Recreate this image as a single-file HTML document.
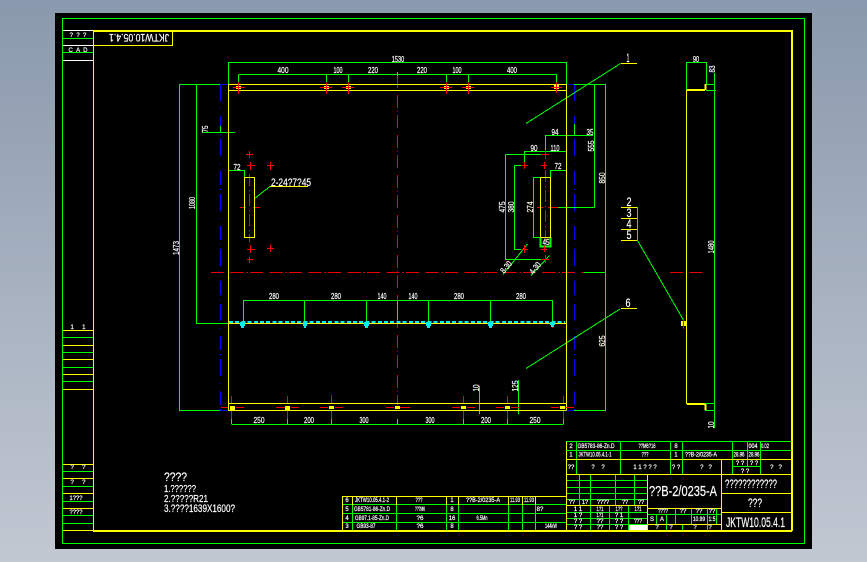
<!DOCTYPE html>
<html><head><meta charset="utf-8"><style>
html,body{margin:0;padding:0;width:867px;height:562px;overflow:hidden;background:linear-gradient(#8a99ad,#c2c8d2)}
svg{position:absolute;left:0;top:0}
.l{fill:none;shape-rendering:crispEdges}
text{fill:#fff;stroke:#fff;stroke-width:.2;font-family:"Liberation Sans",sans-serif;font-size:9px;text-anchor:middle}
.s{font-size:6px}.m{font-size:8.5px}
</style></head><body>
<svg width="867" height="562" viewBox="0 0 867 562" lengthAdjust="spacingAndGlyphs">
<rect x="55" y="13" width="757" height="536" fill="#000"/>
<!-- outer frame -->
<path class="l" stroke="#0f0" d="M62.5 18.5H804.5V543.5H62.5ZM63 38.5H93M63 52.5H93M63 337.5H93M63 352.5H93M63 367.5H93M63 381.5H93M63 471.5H93M63 486.5H93M63 501.5H93M63 515.5H93M63 523.5H93"/>
<path class="l" stroke="#fff" d="M63 30.5H93M63 45.5H93M63 60.5H93"/>
<path class="l" stroke="#ff0" d="M93.5 31V531M172.5 31V45.5H94M63 330.5H93M63 345.5H93M63 359.5H93M63 374.5H93M63 389.5H93M63 464.5H93M63 478.5H93M63 493.5H93M63 508.5H93M63 530.5H93"/>
<path class="l" stroke="#ff0" stroke-width="2" d="M93 31H792M792 30V531M93 531H792"/>
<text x="78" y="37" class="s">? &#160;? &#160;?</text><text x="78" y="52" class="s">C &#160;A &#160;D</text>
<text x="78" y="329" class="s">1 &#160; &#160; 1</text><text x="78" y="469" class="s">? &#160; &#160; ?</text><text x="78" y="484" class="s">? &#160; &#160; ?</text><text x="76" y="500" class="s" textLength="13" lengthAdjust="spacingAndGlyphs">1???</text><text x="76" y="514" class="s" textLength="13" lengthAdjust="spacingAndGlyphs">????</text>
<text transform="rotate(180 139 38)" x="139" y="42" style="font-size:11px" textLength="60" lengthAdjust="spacingAndGlyphs">JKTW10.05.4.1</text>
<!-- blue centerlines -->
<path class="l" stroke="#00f" d="M220.5 84V410M574.5 84V410" stroke-dasharray="17 7 1 7 14 4 1 4"/>
<path class="l" stroke="#00f" d="M220 84.5H228M574 84.5H566M220 410.5H228M566 410.5H574"/>
<!-- red centerlines -->
<path class="l" stroke="#f00" d="M397.5 75V405" stroke-dasharray="13 7 13 2.5 1 3.5"/>
<path class="l" stroke="#e00" d="M211 272.5H584M670 272.5H704" stroke-dasharray="13 6.5 13 3 1.5 2"/>
<path class="l" stroke="#f00" d="M249.5 174V242M545.5 170V242" stroke-dasharray="12 4 1 3"/>
<path class="l" stroke="#f00" d="M240 207.5H246M253 207.5H260M537 207.5H543M548 207.5H558"/>
<!-- green dims -->
<path class="l" stroke="#0f0" d="M228.5 62.5H566.5V84M228.5 62V84M238.5 74.5H556.5V84M238.5 75V84M326.5 75V82M348.5 75V82M446.5 75V82M468.5 75V82M397.5 72V76
M179.5 84.5H220M179.5 84.5V410.5H220M196.5 84.5V323.5H228M202 132.5H235M220.5 126V132M228.5 120V132
M228.5 170.5H244.5V177M228.5 170V178
M550.5 177V170.5H566.5M566.5 170V177M566.5 123V135
M574 84.5H605.5V410.5H574M594.5 84.5V207.5H558M545.5 135.5H593M545.5 135V154M574.5 124V135
M524.5 151.5H566.5M524.5 151V165M505.5 154.5H545M505.5 154.5V259.5H545M514.5 165.5H525M514.5 165.5V249.5H525M533.5 177.5H544M533.5 177.5V237.5H540
M584 272.5H605M637.5 207V240.5
M243.5 300.5H552.5M243.5 300V322M304.5 300V322M366.5 300V322M428.5 300V322M490.5 300V322M552.5 300V322M397.5 300V320
M231.5 424.5H563.5M231.5 419V424M287.5 419V424M331.5 419V424M397.5 419V424M463.5 419V424M507.5 419V424M563.5 419V424
M479.5 386V414M518.5 380V414M476 403.5H480M476 410.5H480M516 403.5H520M516 410.5H520
M686.5 62.5H706.5V84M706 84.5H715M706 90.5H716M714.5 73V428M686.5 62V90M705 403.5H715M705 410.5H715"/>
<path class="l" stroke="#0f0" stroke-width="2" d="M540.5 237V246.5H550.5V237"/>
<!-- green leaders -->
<path class="l" stroke="#0f0" d="M620.5 63.5L526 123.5M620 309L526 368.5M254.5 198.5L270 186.5M527.5 244L503 274.5M549.5 255.5L531 275.5M637.5 240.5L684 321"/>
<!-- yellow plate -->
<path class="l" stroke="#ff0" d="M228.5 84V410.5M566.5 84V410.5M228 84.5H566M228 90.5H566M228 403.5H566M228 410.5H566M228 323.5H566
M244.5 177.5H254.5V237.5H244.5ZM540.5 177.5H550.5V237.5H540.5ZM270 186.5H308M621 63.5H637M621 207.5H637M621 218.5H637M621 229.5H637M621 240.5H637M621 308.5H637
M686.5 90V404"/>
<path class="l" stroke="#ff0" stroke-width="2" d="M687 90H705M705.5 84V90M687 404H705M705.5 404V410"/>
<!-- yellow marks -->
<path fill="#ff0" d="M236 86h5v3h-5zM324 86h5v3h-5zM346 86h5v3h-5zM444 86h5v3h-5zM466 86h5v3h-5zM554 85h5v4h-5zM230 406h5v4h-5zM285 406h5v4h-5zM329 406h5v3h-5zM395 406h5v3h-5zM461 406h5v3h-5zM505 406h5v3h-5zM560 406h5v3h-5zM681 321h5v5h-5z"/>
<!-- red crosses -->
<path class="l" stroke="#f00" d="M233 87.5H245M238.5 82V94M320 87.5H332M326.5 82V94M342 87.5H354M348.5 82V94M440 87.5H452M446.5 82V94M462 87.5H474M468.5 82V94M551 87.5H562M556.5 82V93
M246 154.5H253M249.5 151V158M247 165.5H255M250.5 162V170M267 165.5H274M270.5 162V170M247 249.5H255M250.5 245V253M267 248.5H274M270.5 245V252M247 259.5H253M249.5 257V263
M541 154.5H549M545.5 150V159M521 165.5H528M524.5 162V169M541 165.5H547M544.5 162V169M541 249.5H547M544.5 246V252M521 249.5H528M524.5 245V253M541 259.5H549M545.5 255V263
M241.5 322V328M304.5 322V328M366.5 322V328M428.5 322V328M490.5 322V328M552.5 322V328
M231.5 396V403M231.5 411V419M287.5 396V403M287.5 411V419M331.5 395V403M331.5 411V419M463.5 396V403M463.5 411V419M507.5 396V403M507.5 411V419M563.5 396V403M563.5 411V419
M221 407.5H228M236 407.5H244M276 407.5H285M291 407.5H299M320 407.5H328M335 407.5H343M386 407.5H394M400 407.5H410M452 407.5H460M467 407.5H475M496 407.5H504M511 407.5H519M551 407.5H559M565 407.5H574M683.5 318V329"/>
<!-- cyan -->
<path class="l" stroke="#0ee" stroke-width="2" stroke-dasharray="4 2.2" d="M229 322H565"/>
<path fill="#0ee" d="M240 322h5v4h-1v2h-3v-2h-1zM303 322h4v4h-1v2h-2v-2h-1zM364 322h5v4h-1v2h-3v-2h-1zM426 322h5v4h-1v2h-3v-2h-1zM488 322h5v4h-1v2h-3v-2h-1zM550 322h5v3h-1v2h-3v-2h-1z"/>
<!-- dim text -->
<text x="398" y="62" class="m" textLength="12.5" lengthAdjust="spacingAndGlyphs">1530</text>
<text x="283" y="73" class="m" textLength="11" lengthAdjust="spacingAndGlyphs">400</text><text x="338" y="73" class="m" textLength="9" lengthAdjust="spacingAndGlyphs">100</text><text x="373" y="73" class="m" textLength="10" lengthAdjust="spacingAndGlyphs">220</text><text x="422" y="73" class="m" textLength="10" lengthAdjust="spacingAndGlyphs">220</text><text x="457" y="73" class="m" textLength="9" lengthAdjust="spacingAndGlyphs">100</text><text x="512" y="73" class="m" textLength="10" lengthAdjust="spacingAndGlyphs">400</text>
<text x="696" y="62" class="m" textLength="6" lengthAdjust="spacingAndGlyphs">90</text><text transform="rotate(-90 712 69)" x="712" y="72" class="m" textLength="7" lengthAdjust="spacingAndGlyphs">83</text>
<text transform="rotate(-90 205 129)" x="205" y="132" class="m" textLength="7" lengthAdjust="spacingAndGlyphs">75</text>
<text x="237" y="170" class="m" textLength="7" lengthAdjust="spacingAndGlyphs">72</text><text x="558" y="169" class="m" textLength="7" lengthAdjust="spacingAndGlyphs">72</text>
<text x="555" y="135" class="m" textLength="7" lengthAdjust="spacingAndGlyphs">94</text><text x="590" y="135" class="m" textLength="7" lengthAdjust="spacingAndGlyphs">35</text><text x="534" y="151" class="m" textLength="7" lengthAdjust="spacingAndGlyphs">90</text><text x="555" y="151" class="m" textLength="9" lengthAdjust="spacingAndGlyphs">110</text>
<text transform="rotate(-90 591 146)" x="591" y="149" class="m" textLength="11" lengthAdjust="spacingAndGlyphs">555</text><text transform="rotate(-90 602 178)" x="602" y="181" class="m" textLength="11" lengthAdjust="spacingAndGlyphs">850</text>
<text transform="rotate(-90 192 203)" x="192" y="206" class="m" textLength="12" lengthAdjust="spacingAndGlyphs">1080</text><text transform="rotate(-90 176 248)" x="176" y="251" class="m" textLength="14" lengthAdjust="spacingAndGlyphs">1473</text>
<text transform="rotate(-90 502 207)" x="502" y="210" class="m" textLength="11" lengthAdjust="spacingAndGlyphs">475</text><text transform="rotate(-90 511 207)" x="511" y="210" class="m" textLength="11" lengthAdjust="spacingAndGlyphs">380</text><text transform="rotate(-90 530 207)" x="530" y="210" class="m" textLength="11" lengthAdjust="spacingAndGlyphs">274</text>
<text x="546" y="245" class="m" textLength="7" lengthAdjust="spacingAndGlyphs">45</text>
<text transform="rotate(-90 711 247)" x="711" y="250" class="m" textLength="13" lengthAdjust="spacingAndGlyphs">1480</text><text transform="rotate(-90 602 341)" x="602" y="344" class="m" textLength="11" lengthAdjust="spacingAndGlyphs">625</text>
<text transform="rotate(-90 476 388)" x="476" y="391" class="m" textLength="7" lengthAdjust="spacingAndGlyphs">10</text><text transform="rotate(-90 515 386)" x="515" y="389" class="m" textLength="11" lengthAdjust="spacingAndGlyphs">125</text><text transform="rotate(-90 711 425)" x="711" y="428" class="m" textLength="7" lengthAdjust="spacingAndGlyphs">10</text>
<text transform="rotate(-50 506 267)" x="506" y="270" class="m" textLength="13" lengthAdjust="spacingAndGlyphs">8-30</text><text transform="rotate(-50 535 268)" x="535" y="271" class="m" textLength="13" lengthAdjust="spacingAndGlyphs">4-30</text>
<text x="291" y="186" style="font-size:11px" textLength="40" lengthAdjust="spacingAndGlyphs">2-24?7?45</text>
<text x="628" y="62" style="font-size:12px" textLength="3" lengthAdjust="spacingAndGlyphs">1</text><text x="629" y="206" style="font-size:12px" textLength="5" lengthAdjust="spacingAndGlyphs">2</text><text x="629" y="217" style="font-size:12px" textLength="5" lengthAdjust="spacingAndGlyphs">3</text><text x="629" y="228" style="font-size:12px" textLength="5" lengthAdjust="spacingAndGlyphs">4</text><text x="629" y="239" style="font-size:12px" textLength="5" lengthAdjust="spacingAndGlyphs">5</text><text x="628" y="307" style="font-size:12px" textLength="5" lengthAdjust="spacingAndGlyphs">6</text>
<text x="274" y="299" class="m" textLength="10" lengthAdjust="spacingAndGlyphs">280</text><text x="336" y="299" class="m" textLength="10" lengthAdjust="spacingAndGlyphs">280</text><text x="382" y="299" class="m" textLength="9" lengthAdjust="spacingAndGlyphs">140</text><text x="413" y="299" class="m" textLength="9" lengthAdjust="spacingAndGlyphs">140</text><text x="459" y="299" class="m" textLength="10" lengthAdjust="spacingAndGlyphs">280</text><text x="521" y="299" class="m" textLength="10" lengthAdjust="spacingAndGlyphs">280</text>
<text x="259" y="423" class="m" textLength="11" lengthAdjust="spacingAndGlyphs">250</text><text x="309" y="423" class="m" textLength="10" lengthAdjust="spacingAndGlyphs">200</text><text x="364" y="423" class="m" textLength="9" lengthAdjust="spacingAndGlyphs">300</text><text x="430" y="423" class="m" textLength="9" lengthAdjust="spacingAndGlyphs">300</text><text x="486" y="423" class="m" textLength="10" lengthAdjust="spacingAndGlyphs">200</text><text x="535" y="423" class="m" textLength="11" lengthAdjust="spacingAndGlyphs">250</text>
<!-- notes -->
<text x="175.5" y="481" style="font-size:12px" textLength="23" lengthAdjust="spacingAndGlyphs">????</text>
<text x="180" y="492" style="font-size:10px" textLength="32" lengthAdjust="spacingAndGlyphs">1.??????</text>
<text x="186" y="502" style="font-size:10px" textLength="44" lengthAdjust="spacingAndGlyphs">2.?????R21</text>
<text x="199.5" y="512" style="font-size:11px" textLength="71" lengthAdjust="spacingAndGlyphs">3.????1639X1600?</text>
<!-- parts table -->
<path class="l" stroke="#0f0" d="M342 504.5H566M342 513.5H566M342 522.5H566M352.5 505V530M396.5 505V530M446.5 505V530M458.5 505V530M508.5 505V530M522.5 505V530M535.5 505V530"/>
<path class="l" stroke="#ff0" d="M342.5 496V531M342 496.5H566M352.5 496V505M396.5 496V505M446.5 496V505M458.5 496V505M508.5 496V505M522.5 496V505M535.5 496V505M566.5 442V531"/>
<text x="347" y="502" class="s">6</text><text x="372" y="502" class="s" textLength="34" lengthAdjust="spacingAndGlyphs">JKTW10.05.4.1-2</text><text x="419" y="502" class="s" textLength="7" lengthAdjust="spacingAndGlyphs">???</text><text x="452" y="502" class="s">1</text><text x="483" y="502" class="s" textLength="34" lengthAdjust="spacingAndGlyphs">??B-2/0235-A</text><text x="515" y="502" class="s" textLength="10" lengthAdjust="spacingAndGlyphs">11.93</text><text x="529" y="502" class="s" textLength="10" lengthAdjust="spacingAndGlyphs">11.93</text>
<text x="347" y="511" class="s">5</text><text x="372" y="511" class="s" textLength="36" lengthAdjust="spacingAndGlyphs">GB5781-86-Zn.D</text><text x="420" y="511" class="s" textLength="10" lengthAdjust="spacingAndGlyphs">???M6</text><text x="452" y="511" class="s">8</text><text x="540" y="511" class="s">8?</text>
<text x="347" y="520" class="s">4</text><text x="372" y="520" class="s" textLength="34" lengthAdjust="spacingAndGlyphs">GB97.1-85-Zn.D</text><text x="420" y="520" class="s" textLength="7" lengthAdjust="spacingAndGlyphs">?6</text><text x="452" y="520" class="s">16</text><text x="482" y="520" class="s" textLength="11" lengthAdjust="spacingAndGlyphs">6.5Mn</text>
<text x="347" y="528" class="s">3</text><text x="366" y="528" class="s" textLength="19" lengthAdjust="spacingAndGlyphs">GB93-87</text><text x="420" y="528" class="s" textLength="7" lengthAdjust="spacingAndGlyphs">?6</text><text x="452" y="528" class="s">8</text><text x="551" y="528" class="s" textLength="12" lengthAdjust="spacingAndGlyphs">144kW</text>
<!-- title block -->
<path class="l" stroke="#0f0" d="M566 441.5H791M566 450.5H791M576.5 442V474M620.5 442V474M670.5 442V474M682.5 442V474M732.5 442V474M760.5 442V474M747.5 442V466M732 466.5H760M732 459.5H760
M567 480.5H647M567 487.5H647M567 493.5H647M567 499.5H647M567 512.5H647M567 518.5H647M567 524.5H647M579.5 474V505M590.5 474V530M615.5 474V505M634.5 474V505M609.5 505V530M628.5 505V530
M647 514.5H722M656.5 514V524M666.5 514V530M675.5 508V524M691.5 508V524M707.5 508V530M716.5 508V524M682.5 524V530"/>
<path class="l" stroke="#ff0" d="M566 459.5H791M566 474.5H791M566 505.5H647M647.5 474V531M721.5 459V531M647 508.5H722M647 524.5H722M722 493.5H791M722 512.5H791"/>
<text x="571" y="448" class="s">2</text><text x="596" y="448" class="s" textLength="37" lengthAdjust="spacingAndGlyphs">GB5783-86-Zn.D</text><text x="647" y="448" class="s" textLength="17" lengthAdjust="spacingAndGlyphs">??M6?16</text><text x="676" y="448" class="s">8</text><text x="753" y="448" class="s" textLength="9" lengthAdjust="spacingAndGlyphs">004</text><text x="765" y="448" class="s" textLength="8" lengthAdjust="spacingAndGlyphs">0.02</text>
<text x="571" y="456.5" class="s">1</text><text x="595" y="456.5" class="s" textLength="33" lengthAdjust="spacingAndGlyphs">JKTW10.05.4.1-1</text><text x="645" y="456.5" class="s" textLength="7" lengthAdjust="spacingAndGlyphs">???</text><text x="676" y="456.5" class="s">1</text><text x="701" y="456.5" class="s" textLength="32" lengthAdjust="spacingAndGlyphs">??B-2/0235-A</text><text x="739" y="456.5" class="s" textLength="11" lengthAdjust="spacingAndGlyphs">28.96</text><text x="754" y="456.5" class="s" textLength="11" lengthAdjust="spacingAndGlyphs">28.96</text>
<text x="571" y="469" class="s">??</text><text x="598" y="469" class="s">? &#160; &#160;?</text><text x="645" y="469" class="s">1 1 ? ? ?</text><text x="676" y="469" class="s">? ?</text><text x="706" y="469" class="s">? &#160; ?</text><text x="740" y="465" class="s">? ?</text><text x="754" y="465" class="s">? ?</text><text x="745" y="473" class="s">? ?</text><text x="776" y="469" class="s">? &#160; ?</text>
<text x="572" y="504" class="s" textLength="6" lengthAdjust="spacingAndGlyphs">??</text><text x="585" y="504" class="s" textLength="6" lengthAdjust="spacingAndGlyphs">1?</text><text x="603" y="504" class="s" textLength="12" lengthAdjust="spacingAndGlyphs">????</text><text x="625" y="504" class="s" textLength="6" lengthAdjust="spacingAndGlyphs">??</text><text x="641" y="504" class="s" textLength="6" lengthAdjust="spacingAndGlyphs">??</text>
<text x="578" y="511" class="s">1 1</text><text x="600" y="511" class="s" textLength="7" lengthAdjust="spacingAndGlyphs">1?1</text><text x="619" y="511" class="s" textLength="7" lengthAdjust="spacingAndGlyphs">1??</text><text x="638" y="511" class="s" textLength="7" lengthAdjust="spacingAndGlyphs">1?1</text>
<text x="578" y="517" class="s">1 ?</text><text x="600" y="517" class="s" textLength="7" lengthAdjust="spacingAndGlyphs">1?1</text><text x="619" y="517" class="s">? 1</text>
<text x="578" y="523" class="s">? ?</text><text x="600" y="523" class="s">??</text><text x="619" y="523" class="s">? ?</text><text x="638" y="523" class="s" textLength="8" lengthAdjust="spacingAndGlyphs">???</text>
<text x="578" y="529" class="s">? ?</text><text x="600" y="529" class="s">??</text><text x="619" y="529" class="s">? ?</text>
<rect x="629" y="525" width="18" height="5" fill="#fff"/>
<text x="683" y="496" style="font-size:15px" textLength="68" lengthAdjust="spacingAndGlyphs">??B-2/0235-A</text>
<text x="751" y="488" style="font-size:12px" textLength="52" lengthAdjust="spacingAndGlyphs">????????????</text>
<text x="755" y="507" style="font-size:12px" textLength="14" lengthAdjust="spacingAndGlyphs">???</text>
<text x="755.5" y="527" style="font-size:14px" textLength="59" lengthAdjust="spacingAndGlyphs">JKTW10.05.4.1</text>
<text x="652" y="521" class="s">S</text><text x="662" y="521" class="s">A</text><text x="699" y="521" class="s" textLength="12" lengthAdjust="spacingAndGlyphs">10.99</text><text x="712" y="521" class="s" textLength="7" lengthAdjust="spacingAndGlyphs">1:5</text>
<text x="663" y="513" class="s" textLength="10" lengthAdjust="spacingAndGlyphs">????</text><text x="683" y="513" class="s">??</text><text x="699" y="513" class="s">??</text><text x="712" y="513" class="s">??</text>
<text x="657" y="529" class="s">?</text><text x="671" y="529" class="s">?</text><text x="695" y="529" class="s">?</text><text x="710" y="529" class="s">?</text>
</svg>
</body></html>
